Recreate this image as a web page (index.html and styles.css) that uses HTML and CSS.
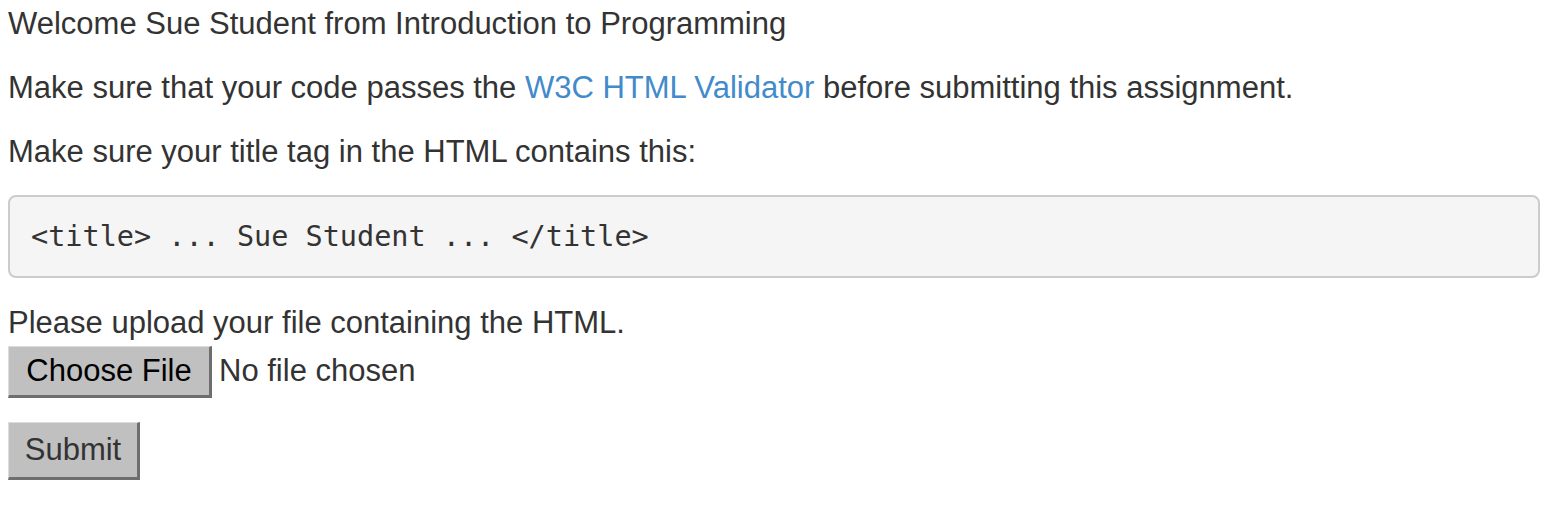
FILE: index.html
```html
<!DOCTYPE html>
<html lang="en">
<head>
<meta charset="utf-8">
<title>Assignment</title>
<link rel="stylesheet" href="styles.css">
</head>
<body>
<p class="line">Welcome Sue Student from Introduction to Programming</p>
<p class="line">Make sure that your code passes the <a class="link" href="#">W3C HTML Validator</a> before submitting this assignment.</p>
<p class="line lead-in">Make sure your title tag in the HTML contains this:</p>
<pre class="code">&lt;title&gt; ... Sue Student ... &lt;/title&gt;</pre>
<form class="upload">
<p class="line upload-label">Please upload your file containing the HTML.</p>
<input class="file" type="file" name="code">
<div class="actions"><input class="submit" type="submit" value="Submit"></div>
</form>
</body>
</html>
```
FILE: styles.css
```css
html, body {
  background: #fff;
}
body {
  margin: 8px;
  font-family: "Liberation Sans", Arial, Helvetica, sans-serif;
  font-size: 31px;
  line-height: 32px;
  color: #333;
}
.line {
  margin: 0 0 32px;
}
.lead-in {
  margin-bottom: 27px;
}
.link {
  color: #428bca;
  text-decoration: none;
}
.code {
  margin: 0 0 29px;
  padding: 22px 21px;
  font-family: "DejaVu Sans Mono", "Liberation Mono", monospace;
  font-size: 28.5px;
  line-height: 35px;
  color: #333;
  background: #f5f5f5;
  border: 2px solid #ccc;
  border-radius: 8px;
}
.upload {
  margin: 0;
}
.upload-label {
  margin: 0 0 6px;
}
.file {
  display: block;
  font-family: "Liberation Sans", Arial, Helvetica, sans-serif;
  font-size: 31px;
  color: #333;
  margin: 0;
  padding: 0;
  line-height: 52px;
}
.file::file-selector-button {
  font-family: "Liberation Sans", Arial, Helvetica, sans-serif;
  font-size: 31px;
  color: #000;
  background: #c0c0c0;
  height: 52px;
  width: 204px;
  padding: 0;
  margin: 0 7px 0 0;
  border-style: solid;
  border-color: #dcdcdc #6e6e6e #6e6e6e #dcdcdc;
  border-width: 1px 3px 3px 1px;
  border-radius: 0;
}
.actions {
  margin-top: 24px;
}
.submit {
  font-family: "Liberation Sans", Arial, Helvetica, sans-serif;
  font-size: 31px;
  color: #333;
  background: #c0c0c0;
  width: 132px;
  height: 58px;
  padding: 0;
  margin: 0;
  border-style: solid;
  border-color: #dcdcdc #6e6e6e #6e6e6e #dcdcdc;
  border-width: 1px 3px 3px 1px;
  border-radius: 0;
}
```
